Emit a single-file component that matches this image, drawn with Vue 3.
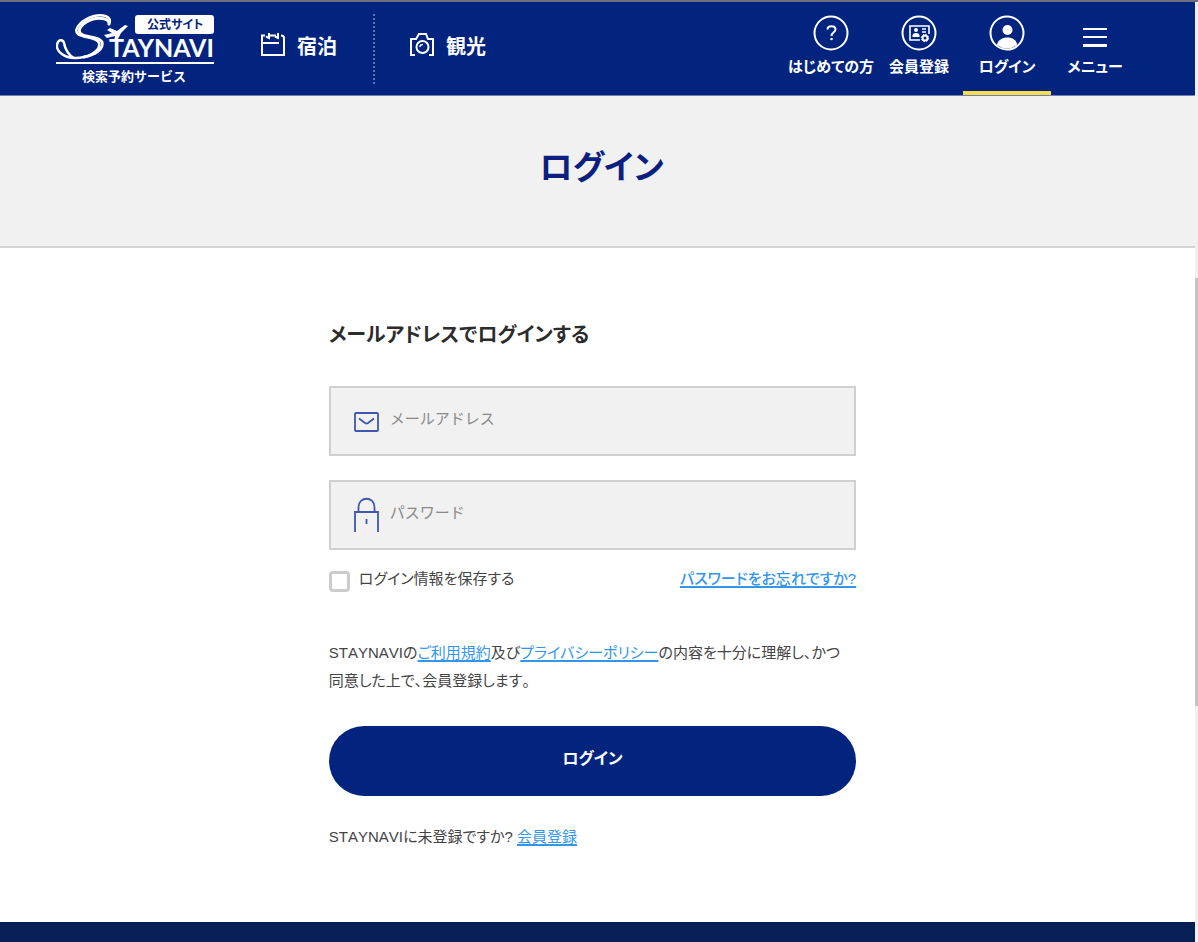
<script setup>
import { ref } from 'vue'

const email = ref('')
const password = ref('')
const remember = ref(false)
</script>

<template>
  <div class="window">
    <div class="page">
      <header class="header">
        <a class="logo" href="#" aria-label="STAYNAVI 公式サイト 検索予約サービス">
          <svg width="160" height="74" viewBox="0 0 160 74">
            <g fill="none" stroke="#fff" stroke-linecap="round" stroke-linejoin="round">
              <path d="M53 12C57 4 46 2 38 4C27 7 16 17 22 22C27 26 41 25 43 31C45 39 32 46 19 46C8 46 0 39 1 33C2 27 7 27 8 31C9 37 13 44 18 46" stroke-width="2.500" />
              <path d="M53 12C54 7 45 5 37 7C27 10 20 18 25 22C30 26 43 24 46 30C48 37 39 43 28 45" stroke-width="3" />
            </g>
            <path d="M48 23L56 21L51 18L54 16L61 19L69 13L72 14L65 21L61 29L58 29L59 24L51 26Z" fill="#fff" />
            <rect x="79" y="3" width="79" height="19" rx="3" fill="#fff" />
            <text x="91" y="17" class="logo-tag">公式サイト</text>
            <text x="53" y="45" class="logo-name">TAYNAVI</text>
            <rect x="0" y="50" width="158" height="2" fill="#fff" />
            <text x="26" y="69" class="logo-sub">検索予約サービス</text>
          </svg>
        </a>
        <nav class="main-nav">
          <a class="nav-link" href="#">
            <svg width="24" height="24" viewBox="0 0 24 24" fill="none" stroke="#fff" stroke-width="2">
              <path d="M4 2.500H1V22H23V5Q23 2.500 20 2.500M9 2.500H15M1 10H18M8 0V5L5 3.500M17 0V5L14 3.500" />
            </svg>
            <span>宿泊</span>
          </a>
          <a class="nav-link" href="#">
            <svg width="24" height="24" viewBox="0 0 24 24" fill="none" stroke="#fff" stroke-width="2">
              <path d="M5 22H1V6H6L9 1H16L18 6H23V22H19" />
              <circle cx="12.500" cy="14" r="6" />
              <path d="M10 14V13Q10.500 11.500 13 11.500" stroke-width="1.500" />
            </svg>
            <span>観光</span>
          </a>
        </nav>
        <nav class="user-nav">
          <a class="user-link" href="#">
            <svg width="36" height="36" viewBox="0 0 36 36" fill="none" stroke="#fff">
              <circle cx="18" cy="18" r="16.500" stroke-width="2" />
              <path d="M14.500 14.500C14.500 10 22.500 10 22.500 14.500C22.500 17.500 18.500 17 18.500 21" stroke-width="2" />
              <circle cx="18.500" cy="24" r="1.300" fill="#fff" stroke="none" />
            </svg>
            <span>はじめての方</span>
          </a>
          <a class="user-link" href="#">
            <svg width="36" height="36" viewBox="0 0 36 36" fill="none" stroke="#fff">
              <circle cx="18" cy="18" r="16.500" stroke-width="2" />
              <path d="M19 25H9V11H28V19" stroke-width="1.600" />
              <circle cx="15" cy="15" r="2" fill="#fff" stroke="none" />
              <path d="M11.500 22V20Q12 18 15 18Q18 18 18.500 20V22Z" fill="#fff" stroke="none" />
              <path d="M21 14H25M21 17H25" stroke-width="1.400" />
              <circle cx="24" cy="23" r="2.500" stroke-width="2" />
              <circle cx="24" cy="23" r="3.700" stroke-width="1" stroke-dasharray="1.500 1.400" />
            </svg>
            <span>会員登録</span>
          </a>
          <a class="user-link active" href="#" aria-current="page">
            <svg width="36" height="36" viewBox="0 0 36 36">
              <circle cx="18" cy="18" r="16.500" fill="none" stroke="#fff" stroke-width="2" />
              <circle cx="18.500" cy="15" r="5" fill="#fff" />
              <path d="M8 30C9 20 28 20 28 30Q18 37 8 30Z" fill="#fff" />
            </svg>
            <span>ログイン</span>
          </a>
          <button class="user-link" type="button">
            <svg width="36" height="36" viewBox="0 0 36 36" fill="#fff">
              <rect x="6" y="13" width="24" height="2" />
              <rect x="6" y="21" width="24" height="2" />
              <rect x="6" y="29" width="24" height="3" />
            </svg>
            <span>メニュー</span>
          </button>
        </nav>
      </header>

      <div class="title-band">
        <h1>ログイン</h1>
      </div>

      <main class="content">
        <form class="login" @submit.prevent>
          <h2>メールアドレスでログインする</h2>
          <label class="field">
            <svg width="26" height="36" viewBox="0 0 26 36" fill="none" stroke="#3f57ad" stroke-width="1.800">
              <rect x="1" y="10" width="23" height="18" rx="1" />
              <path d="M5 15.500L11 20Q12.500 21 14 20L20 15.500" />
            </svg>
            <input v-model="email" type="email" placeholder="メールアドレス" aria-label="メールアドレス">
          </label>
          <label class="field">
            <svg width="26" height="36" viewBox="0 0 26 36" fill="none" stroke="#3f57ad" stroke-width="1.800">
              <path d="M1 35V15H24V35M4.500 15V10C4.500 -1 20.500 -1 20.500 10V15M12.500 22V27" />
            </svg>
            <input v-model="password" type="password" placeholder="パスワード" aria-label="パスワード">
          </label>
          <div class="options">
            <label class="remember">
              <input v-model="remember" type="checkbox">
              <span>ログイン情報を保存する</span>
            </label>
            <a href="#">パスワードをお忘れですか?</a>
          </div>
          <p class="terms">STAYNAVIの<a href="#">ご利用規約</a>及び<a href="#">プライバシーポリシー</a>の内容を十分に理解し、かつ同意した上で、会員登録します。</p>
          <button class="submit" type="submit">ログイン</button>
          <p class="register">STAYNAVIに未登録ですか? <a href="#">会員登録</a></p>
        </form>
      </main>
      <footer class="footer"></footer>
    </div>
    <div class="scroll-track"><div class="scroll-thumb"></div></div>
  </div>
</template>

<style>
body {
  margin: 0;
}
</style>

<style scoped>
* {
  box-sizing: border-box;
}
.window {
  display: flex;
  min-height: 100vh;
  border-top: 2px solid #6c7080;
  font-family: "Liberation Sans", "Noto Sans CJK JP", sans-serif;
  font-feature-settings: "palt";
  font-size: 15px;
  color: #444;
  background: #fff;
}
.page {
  flex: 1;
  display: flex;
  flex-direction: column;
}
.header {
  display: flex;
  height: 94px;
  padding: 0 56px;
  background: #02247f;
  border-bottom: 1px solid #6f82b8;
}
.logo {
  display: block;
  padding-top: 10px;
}
.logo svg {
  display: block;
}
.logo-tag {
  font-size: 12px;
  font-weight: 700;
  fill: #02247f;
}
.logo-name {
  font-family: Lato, sans-serif;
  font-size: 25px;
  font-weight: 700;
  fill: #fff;
}
.logo-sub {
  font-feature-settings: normal;
  font-size: 13px;
  font-weight: 700;
  fill: #fff;
}
.main-nav {
  display: flex;
  align-items: flex-start;
  padding-top: 12px;
}
.nav-link {
  display: flex;
  align-items: center;
  gap: 12px;
  height: 70px;
  padding: 0 36px 8px 45px;
  color: #fff;
  font-size: 20px;
  font-weight: 700;
  text-decoration: none;
}
.nav-link + .nav-link {
  padding-left: 35px;
  border-left: 2px dotted #5b72b4;
}
.user-nav {
  display: flex;
  margin-left: auto;
}
.user-link {
  display: flex;
  flex-direction: column;
  align-items: center;
  gap: 4px;
  width: 88px;
  padding: 13px 0 0;
  border: 0;
  border-bottom: 4px solid transparent;
  background: none;
  color: #fff;
  font: inherit;
  font-feature-settings: inherit;
  font-weight: 700;
  line-height: 24px;
  white-space: nowrap;
  text-decoration: none;
}
.user-link svg {
  flex: none;
}
.user-link.active {
  border-bottom-color: #fbdc4a;
}
.title-band {
  height: 152px;
  padding: 46px 0 0 8px;
  background: #f1f1f1;
  border-bottom: 2px solid #d3d3d3;
  text-align: center;
}
h1 {
  margin: 0;
  color: #0b1f80;
  font-size: 33px;
  line-height: 52px;
}
.content {
  padding: 71px 10px 70px 0;
  font-kerning: none;
}
.login {
  width: 44.5%;
  margin: 0 auto;
}
h2 {
  margin: 0 0 35px;
  color: #2c2c2c;
  font-size: 20px;
  line-height: 32px;
}
.field {
  display: flex;
  align-items: center;
  gap: 10px;
  height: 70px;
  margin-bottom: 24px;
  padding: 0 23px;
  background: #f1f1f1;
  border: 2px solid #d0d0d0;
}
.field input {
  flex: 1;
  min-width: 0;
  padding: 0 0 6px;
  border: 0;
  outline: 0;
  background: none;
  color: #444;
  font: inherit;
  font-feature-settings: normal;
}
.field input::placeholder {
  color: #8a8a8a;
  opacity: 1;
}
.options {
  display: flex;
  justify-content: space-between;
  margin-top: -7px;
  line-height: 24px;
}
.remember {
  display: flex;
  gap: 9px;
}
.remember input {
  appearance: none;
  width: 21px;
  height: 21px;
  margin: 4px 0 0;
  border: 3px solid #ccc;
  border-radius: 4px;
  background: #fff;
}
.remember input:checked {
  background: #02247f;
}
a {
  color: #3396ec;
}
.options a,
.terms a,
.register a {
  text-decoration-thickness: 2px;
  text-underline-offset: 2px;
}
.options a {
  font-weight: 500;
}
.terms {
  margin: 47px 0 31px;
  padding-right: 8px;
  line-height: 28px;
}
.submit {
  display: block;
  width: 100%;
  height: 70px;
  padding: 0 0 8px;
  border: 0;
  border-radius: 35px;
  background: #02247f;
  color: #fff;
  font: inherit;
  font-feature-settings: inherit;
  font-size: 16px;
  font-weight: 700;
}
.register {
  margin: 26px 0 0;
  line-height: 30px;
}
.footer {
  flex: 1;
  min-height: 18px;
  background: #081f55;
}
.scroll-track {
  width: 3px;
  padding-top: 276px;
  background: #f0f0f0;
}
.scroll-thumb {
  height: 428px;
  background: #c4c4c4;
}
</style>
